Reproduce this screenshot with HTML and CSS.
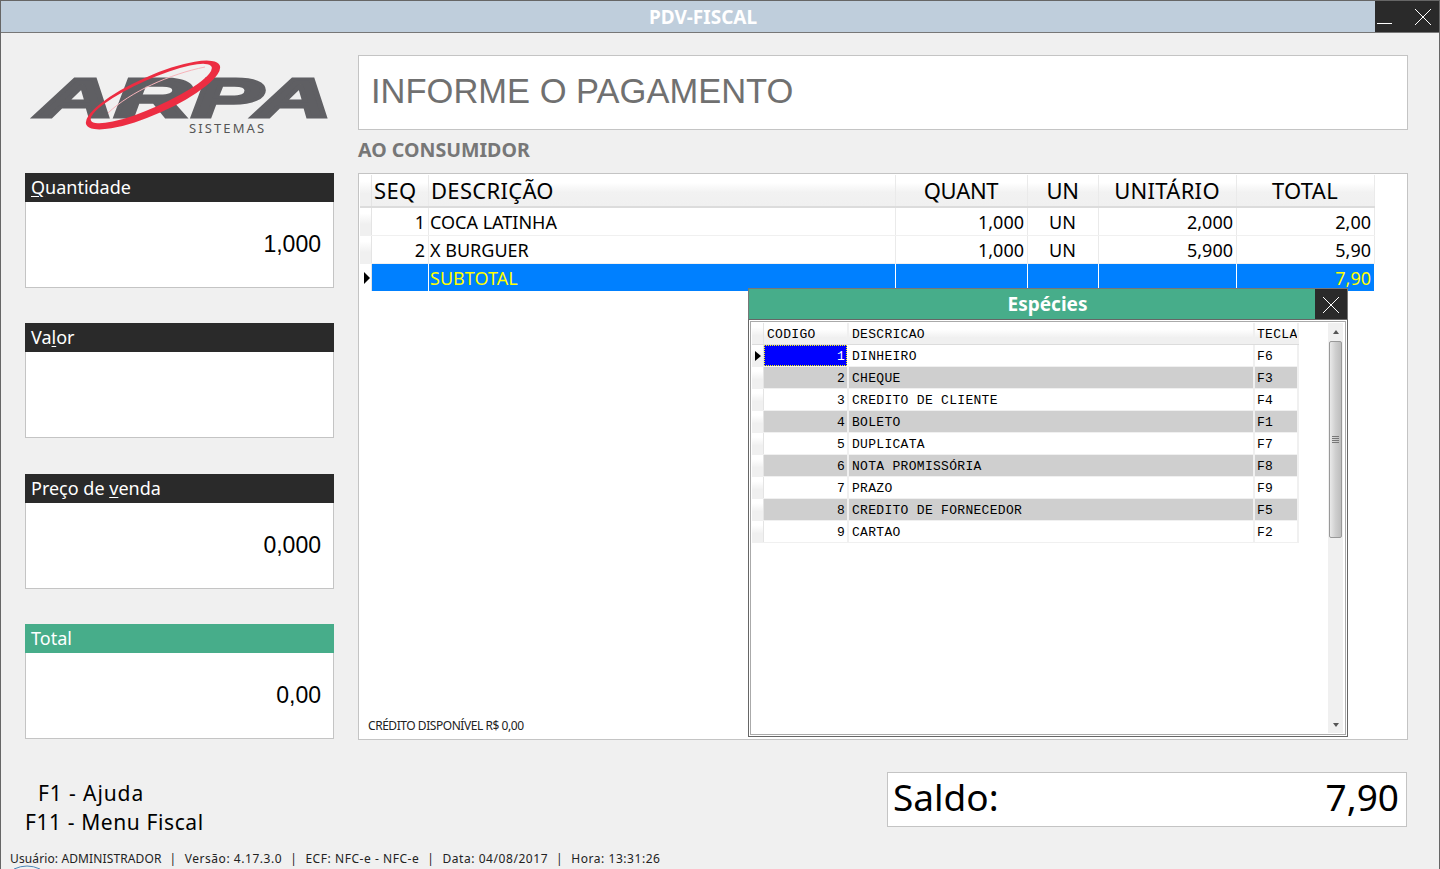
FILE: index.html
```html
<!DOCTYPE html>
<html lang="pt-BR">
<head>
<meta charset="utf-8">
<title>PDV-FISCAL</title>
<link rel="stylesheet" href="styles.css">
</head>
<body>
<div class="app">
  <header class="titlebar">
    <div class="title">PDV-FISCAL</div>
    <div class="winbtns">
      <button class="winbtn"><svg width="32" height="32" viewBox="0 0 32 32"><path d="M2 22.5H17" stroke="#fff" fill="none"/></svg></button>
      <button class="winbtn"><svg width="32" height="32" viewBox="0 0 32 32"><path d="M8 8L24 24M24 8L8 24" stroke="#fff" fill="none"/></svg></button>
    </div>
  </header>

  <main class="content">
    <aside class="left">
      <div class="logo">
        <svg width="309" height="118" viewBox="0 0 309 118">
          <g transform="translate(-25,-55)">
            <text class="logo-word" x="37" y="116.5" textLength="295" lengthAdjust="spacingAndGlyphs">ARPA</text>
            <path fill="#ec2d42" fill-rule="evenodd" transform="rotate(-24 153 95)" d="M80 95a73 19 0 1 0 146 0a73 19 0 1 0 -146 0ZM86 93a66 14 0 1 0 132 0a66 14 0 1 0 -132 0Z"/>
            <path class="logo-shine" d="M108 113C130 92 170 74 205 67"/>
            <text class="logo-sub" x="189" y="133">SISTEMAS</text>
          </g>
        </svg>
      </div>
      <div class="cards">
        <section class="card"><h2 class="card-h"><u>Q</u>uantidade</h2><div class="card-v">1,000</div></section>
        <section class="card"><h2 class="card-h">Va<u>l</u>or</h2><div class="card-v"></div></section>
        <section class="card"><h2 class="card-h">Preço de <u>v</u>enda</h2><div class="card-v">0,000</div></section>
        <section class="card"><h2 class="card-h green">Total</h2><div class="card-v">0,00</div></section>
      </div>
    </aside>

    <section class="right">
      <div class="prompt">INFORME O PAGAMENTO</div>
      <div class="customer">AO CONSUMIDOR</div>
      <div class="gridbox">
        <div class="sale">
          <div class="srow shead">
            <div class="ind"></div><div class="c seq">SEQ</div><div class="c desc">DESCRIÇÃO</div><div class="c ctr">QUANT</div><div class="c ctr">UN</div><div class="c ctr">UNITÁRIO</div><div class="c ctr">TOTAL</div>
          </div>
          <div class="srow">
            <div class="ind"></div><div class="c num">1</div><div class="c">COCA LATINHA</div><div class="c num">1,000</div><div class="c ctr">UN</div><div class="c num">2,000</div><div class="c num">2,00</div>
          </div>
          <div class="srow">
            <div class="ind"></div><div class="c num">2</div><div class="c">X BURGUER</div><div class="c num">1,000</div><div class="c ctr">UN</div><div class="c num">5,900</div><div class="c num">5,90</div>
          </div>
          <div class="srow ssel">
            <div class="ind"><span class="arrow"></span></div><div class="c"></div><div class="c">SUBTOTAL</div><div class="c"></div><div class="c"></div><div class="c"></div><div class="c num">7,90</div>
          </div>
        </div>
        <div class="credit">CRÉDITO DISPONÍVEL R$ 0,00</div>

        <div class="dialog">
          <div class="dlg-head">
            <div class="dlg-title">Espécies</div>
            <button class="dlg-close"><svg width="32" height="32" viewBox="0 0 32 32"><path d="M8 8L24 24M24 8L8 24" stroke="#fff" fill="none"/></svg></button>
          </div>
          <div class="dlg-body">
            <div class="species">
              <div class="prow phead"><div class="pind"></div><div class="p">CODIGO</div><div class="p">DESCRICAO</div><div class="p">TECLA</div></div>
              <div class="prow"><div class="pind"><span class="arrow"></span></div><div class="p pnum focus">1</div><div class="p">DINHEIRO</div><div class="p">F6</div></div>
              <div class="prow alt"><div class="pind"></div><div class="p pnum">2</div><div class="p">CHEQUE</div><div class="p">F3</div></div>
              <div class="prow"><div class="pind"></div><div class="p pnum">3</div><div class="p">CREDITO DE CLIENTE</div><div class="p">F4</div></div>
              <div class="prow alt"><div class="pind"></div><div class="p pnum">4</div><div class="p">BOLETO</div><div class="p">F1</div></div>
              <div class="prow"><div class="pind"></div><div class="p pnum">5</div><div class="p">DUPLICATA</div><div class="p">F7</div></div>
              <div class="prow alt"><div class="pind"></div><div class="p pnum">6</div><div class="p">NOTA PROMISSÓRIA</div><div class="p">F8</div></div>
              <div class="prow"><div class="pind"></div><div class="p pnum">7</div><div class="p">PRAZO</div><div class="p">F9</div></div>
              <div class="prow alt"><div class="pind"></div><div class="p pnum">8</div><div class="p">CREDITO DE FORNECEDOR</div><div class="p">F5</div></div>
              <div class="prow"><div class="pind"></div><div class="p pnum">9</div><div class="p">CARTAO</div><div class="p">F2</div></div>
            </div>
            <div class="scroll">
              <div class="sc-up"></div>
              <div class="sc-track"><div class="sc-thumb"><span class="grip"></span></div></div>
              <div class="sc-down"></div>
            </div>
          </div>
        </div>
      </div>
    </section>
  </main>

  <section class="bottom">
    <div class="help">
      <div class="help-1">F1 - Ajuda</div>
      <div class="help-2">F11 - Menu Fiscal</div>
    </div>
    <div class="saldo"><span>Saldo:</span><span>7,90</span></div>
  </section>

  <footer class="status"><span class="user">Usuário: ADMINISTRADOR</span><span class="sep">|</span><span>Versão: 4.17.3.0</span><span class="sep">|</span><span>ECF: NFC-e - NFC-e</span><span class="sep">|</span><span>Data: 04/08/2017</span><span class="sep">|</span><span>Hora: 13:31:26</span></footer>
  <svg class="peek" width="30" height="4" viewBox="0 0 30 4"><path d="M2 4Q15 -2 28 4" stroke="#4a86b8" fill="none"/></svg>
</div>
</body>
</html>
```
FILE: styles.css
```css
* { box-sizing: border-box; }
html, body { margin: 0; padding: 0; }
body { width: 1440px; height: 869px; overflow: hidden; background: #f0f0f0; font-family: "Noto Sans", "DejaVu Sans", sans-serif; color: #000; }
button { border: 0; padding: 0; margin: 0; background: none; display: block; }
svg { display: block; }

.app { position: relative; width: 1440px; height: 869px; display: flex; flex-direction: column; background: #f0f0f0; border-left: 1px solid #666; border-right: 1px solid #666; overflow: hidden; }

.titlebar { height: 33px; flex: none; display: flex; background: #bfcedc; border-top: 1px solid #666; border-bottom: 1px solid #777; margin-left: -1px; margin-right: -1px; padding-left: 1px; }
.title { flex: 1; text-align: center; color: #fff; font: bold 19px/33px "Noto Sans", sans-serif; padding-left: 30px; }
.winbtns { display: flex; width: 65px; background: #2a2a2a; }
.winbtn { width: 32px; height: 31px; }

.content { display: flex; padding: 22px 31px 0 24px; flex: none; }
.left { width: 309px; flex: none; margin-right: 24px; display: flex; flex-direction: column; }
.logo { height: 118px; }
.logo-word { font: italic bold 56px "Liberation Sans", sans-serif; fill: #5f5f63; stroke: #5f5f63; stroke-width: 3px; stroke-linejoin: miter; }
.logo-shine { fill: none; stroke: #f7b3ba; stroke-width: 1px; }
.logo-sub { font: 13px "Noto Sans", sans-serif; letter-spacing: 2.1px; fill: #555; }

.cards { height: 566px; display: flex; flex-direction: column; justify-content: space-between; }
.card { height: 115px; display: flex; flex-direction: column; background: #fff; border: 1px solid #c4c4c4; border-top: 0; }
.card-h { margin: 0 -1px; height: 29px; flex: none; padding-left: 6px; background: #2a2a2a; color: #fff; font: 400 18px/29px "Noto Sans", sans-serif; }
.card-h u { text-underline-offset: 2px; }
.card-h.green { background: #47ad8a; }
.card-v { flex: 1; display: flex; align-items: center; justify-content: flex-end; padding: 0 12px 0 0; font: 23px "Liberation Sans", sans-serif; }

.right { flex: 1; min-width: 0; display: flex; flex-direction: column; }
.prompt { height: 75px; background: #fff; border: 1px solid #c4c4c4; padding-left: 12px; font: 34.5px/70px "Liberation Sans", sans-serif; color: #707070; }
.customer { height: 43px; padding-top: 8px; font: bold 19.6px/24px "Noto Sans", sans-serif; color: #777; }
.gridbox { position: relative; height: 567px; background: #fff; border: 1px solid #c4c4c4; padding: 1px 32px 0 1px; }

.sale { display: flex; flex-direction: column; }
.srow { display: grid; grid-template-columns: 12px 57px 467px 132px 71px 138px 138px; height: 28px; font: 18px/29px "Noto Sans", sans-serif; letter-spacing: 0; border-bottom: 1px solid #f0f0f0; }
.srow .c:nth-child(3) { padding-left: 1px; }
.shead { height: 33px; font-size: 22px; line-height: 31px; letter-spacing: .3px; border-bottom: 2px solid #dcdcdc; background: linear-gradient(#fff 0 25%, #f2f2f2 55%, #f0f0f0); }
.shead .c:nth-child(3) { padding-left: 2px; }
.shead .c:nth-child(4), .shead .c:nth-child(5) { letter-spacing: -.3px; }
.c { padding: 0 3px 0 2px; border-right: 1px solid #eaeaea; white-space: nowrap; overflow: hidden; }
.seq { text-align: left; }
.desc { text-align: left; }
.num { text-align: right; }
.ctr { text-align: center; }
.ind { position: relative; background: linear-gradient(#fff 0 20%, #f0f0f0 60%); border-right: 1px solid #e4e4e4; }
.ssel { background: #0080ff; color: #ff0; border-bottom: 0; height: 27px; }
.ssel .c { border-right-color: #fff; }
.ssel .num { color: #ff0; }
.ssel .ind { background: #fff; }
.arrow { position: absolute; left: 4px; top: 50%; margin-top: -6px; border-left: 6px solid #000; border-top: 6px solid transparent; border-bottom: 6px solid transparent; }
.credit { position: absolute; left: 9px; bottom: 5px; font: 12px/16px "Noto Sans", sans-serif; color: #222; letter-spacing: -.45px; }

.dialog { position: absolute; left: 389px; top: 114px; width: 600px; height: 449px; display: flex; flex-direction: column; background: #f0f0f0; }
.dlg-head { height: 32px; flex: none; display: flex; background: #47ad8a; border: 1px solid #777; border-bottom-color: #666; }
.dlg-title { flex: 1; text-align: center; color: #fff; font: bold 19px/30px "Noto Sans", sans-serif; padding-left: 31px; }
.dlg-close { width: 32px; height: 30px; background: #2a2a2a; }
.dlg-body { flex: 1; min-height: 0; display: flex; background: #fff; border: 1px solid #666; border-top: 0; box-shadow: inset 0 0 0 1px #fff, inset 0 0 0 2px #aaa; padding: 3px 3px 3px 3px; }
.species { width: 577px; flex: none; display: flex; flex-direction: column; }
.prow { display: grid; grid-template-columns: 12px 85px 406px 44px; width: 547px; height: 22px; font: 13px/23px "Liberation Mono", monospace; letter-spacing: .3px; border-bottom: 1px solid #f0f0f0; }
.phead { height: 22px; background: linear-gradient(#fff 0 30%, #f0f0f0 70%); border-bottom: 1px solid #dcdcdc; }
.alt { background: #cfcfcf; }
.p { padding: 0 2px 0 3px; border-right: 2px solid #f0f0f0; white-space: nowrap; overflow: hidden; }
.p:last-child { padding: 0 0 0 2px; }
.pnum { text-align: right; }
.pind { position: relative; background: linear-gradient(#fff 0 20%, #f0f0f0 60%); border-right: 1px solid #e4e4e4; }
.pind .arrow { left: 3px; margin-top: -5px; border-left-width: 6px; border-top-width: 5px; border-bottom-width: 5px; }
.focus { background: #00f; color: #fff; outline: 1px dotted #ff0; outline-offset: -1px; border-right: 0; margin-right: 2px; }

.scroll { width: 15px; flex: none; margin-left: -1px; display: flex; flex-direction: column; background: #f0f0f0; }
.sc-up, .sc-down { height: 18px; flex: none; position: relative; }
.sc-up::after { content: ""; position: absolute; left: 5px; top: 7px; border: 3.5px solid transparent; border-top: 0; border-bottom: 4px solid #555; }
.sc-down::after { content: ""; position: absolute; left: 5px; top: 8px; border: 3.5px solid transparent; border-bottom: 0; border-top: 4px solid #555; }
.sc-track { flex: 1; min-height: 0; }
.sc-thumb { margin: 0 1px; height: 197px; display: flex; align-items: center; justify-content: center; background: linear-gradient(90deg, #e9e9e9, #cfcfcf 50%, #bdbdbd); border: 1px solid #999; border-radius: 2px; }
.grip { width: 7px; height: 7px; background: repeating-linear-gradient(#777 0 1px, transparent 1px 2px); }

.bottom { flex: none; display: flex; justify-content: space-between; align-items: flex-start; padding: 32px 32px 0 24px; }
.help { font: 21px/29px "Noto Sans", sans-serif; letter-spacing: .6px; padding-top: 7px; }
.help-1 { padding-left: 13px; letter-spacing: .9px; }
.saldo { width: 520px; height: 55px; display: flex; justify-content: space-between; align-items: center; background: #fff; border: 1px solid #c4c4c4; padding: 0 7px 5px 5px; font: 37px/44px "Noto Sans", sans-serif; }

.status { display: flex; padding: 14px 0 0 9px; font: 12px/16px "Noto Sans", sans-serif; letter-spacing: .55px; color: #222; white-space: nowrap; }
.user { letter-spacing: .12px; }
.sep { margin: 0 8px; }
.peek { position: absolute; left: 11px; bottom: 0; }
```
